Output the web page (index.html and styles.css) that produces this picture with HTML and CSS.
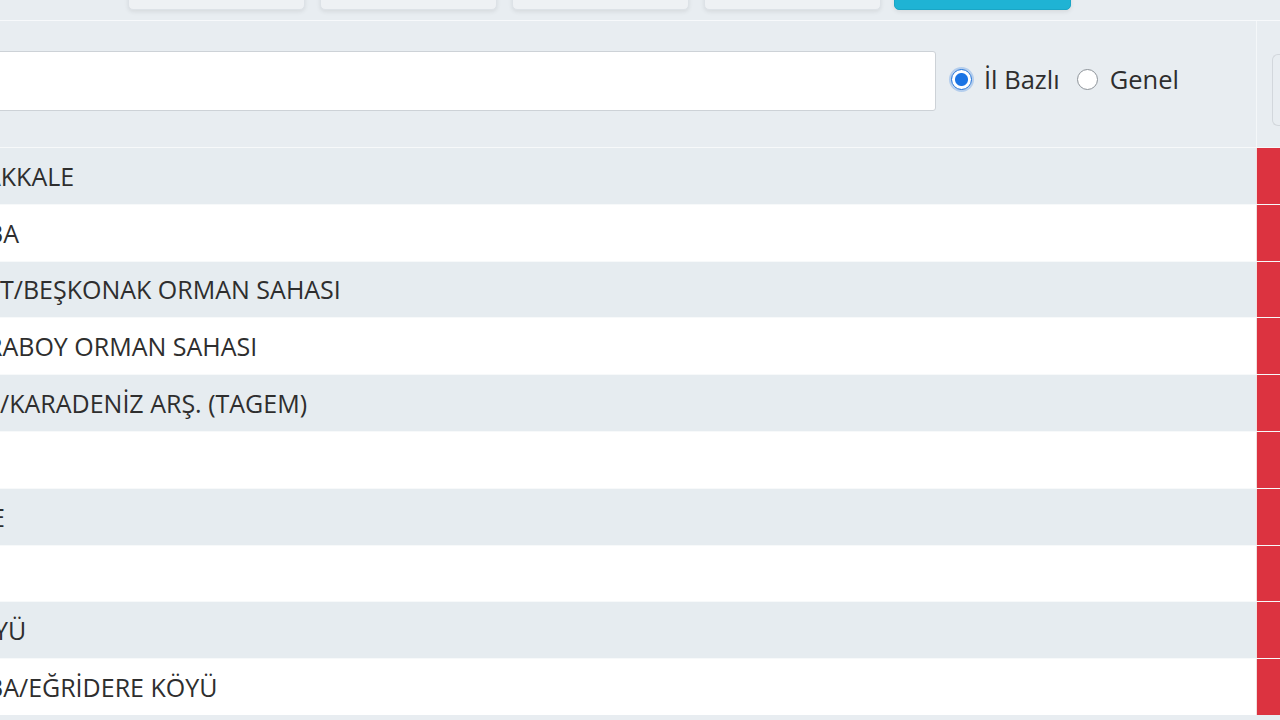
FILE: index.html
```html
<!DOCTYPE html>
<html lang="tr">
<head>
  <meta charset="UTF-8">
  <title>Liste</title>
  <link rel="stylesheet" href="styles.css">
</head>
<body>
  <div class="page">
    <div class="toolbar">
      <button class="tool-btn"></button>
      <button class="tool-btn"></button>
      <button class="tool-btn"></button>
      <button class="tool-btn"></button>
      <button class="tool-btn primary"></button>
    </div>

    <div class="filter-row">
      <div class="filter-main">
        <input type="text" class="search-input">
        <div class="radio-group">
          <label class="radio-label"><input type="radio" name="scope" checked> İl Bazlı</label>
          <label class="radio-label"><input type="radio" name="scope"> Genel</label>
        </div>
      </div>
      <div class="filter-side">
        <div class="side-box"></div>
      </div>
    </div>

    <div class="table">
      <div class="row striped"><div class="cell name cut-a">AKKALE</div><div class="cell status"></div></div>
      <div class="row"><div class="cell name cut-b">BA</div><div class="cell status"></div></div>
      <div class="row striped"><div class="cell name">T/BEŞKONAK ORMAN SAHASI</div><div class="cell status"></div></div>
      <div class="row"><div class="cell name cut-b">RABOY ORMAN SAHASI</div><div class="cell status"></div></div>
      <div class="row striped"><div class="cell name">/KARADENİZ ARŞ. (TAGEM)</div><div class="cell status"></div></div>
      <div class="row"><div class="cell name"></div><div class="cell status"></div></div>
      <div class="row striped"><div class="cell name cut-e">E</div><div class="cell status"></div></div>
      <div class="row"><div class="cell name"></div><div class="cell status"></div></div>
      <div class="row striped"><div class="cell name cut-y">YÜ</div><div class="cell status"></div></div>
      <div class="row"><div class="cell name cut-b">BA/EĞRİDERE KÖYÜ</div><div class="cell status"></div></div>
    </div>
  </div>
</body>
</html>
```

FILE: styles.css
```css
body {
  margin: 0;
  background: #e8edf1;
  font-family: "Open Sans", "Liberation Sans", sans-serif;
  color: #2e2e2e;
  overflow: hidden;
}

.page {
  margin-left: -20px;
  width: 1300px;
}

/* top buttons, only their lower edge is visible */
.toolbar {
  height: 21px;
  display: flex;
  align-items: flex-end;
  gap: 15px;
  padding: 0 0 10px 148px;
  box-sizing: border-box;
  border-bottom: 1px solid #f7f9fb;
}

.tool-btn {
  flex: 0 0 177px;
  height: 40px;
  border: 1px solid #dde2e7;
  border-radius: 5px;
  background: #eef1f4;
  box-shadow: 0 2px 4px rgba(0,0,0,0.08);
}

.tool-btn.primary {
  margin-left: -2px;
  background: #1fb3d4;
  border-color: #1aa6c6;
}

.filter-row {
  display: grid;
  grid-template-columns: 1276px 1fr;
  height: 126px;
}

.filter-main {
  display: flex;
  align-items: flex-start;
  padding-top: 30px;
}

.search-input {
  width: 956px;
  height: 60px;
  box-sizing: border-box;
  border: 1px solid #cdd2d7;
  border-radius: 3px;
  background: #fff;
}

.radio-group {
  display: flex;
  align-items: center;
  height: 56px;
  gap: 17px;
  margin-left: 15px;
  font-size: 25.5px;
}

.radio-label {
  display: flex;
  align-items: center;
  gap: 12px;
}

.radio-label input {
  appearance: none;
  margin: 0;
  width: 21px;
  height: 21px;
  border: 1.5px solid #8d9399;
  border-radius: 50%;
  background: #fff;
}

.radio-label input:checked {
  border-color: #1b6fd8;
  background: radial-gradient(circle, #1b74e4 0 6px, #fff 7px);
  box-shadow: 0 0 0 2px rgba(27,116,228,0.25);
}

.filter-side {
  border-left: 1px solid #f4f7f9;
  padding: 33px 0 0 15px;
}

.side-box {
  height: 70px;
  border: 1px solid #d2d7dc;
  border-right: none;
  border-radius: 6px 0 0 6px;
}

.row {
  display: grid;
  grid-template-columns: 1276px 24px;
  height: 56.8px;
  box-sizing: border-box;
  border-top: 1px solid #f7f9fa;
  background: #fff;
}

.row.striped {
  background: #e6ecf0;
}

.cell.name {
  display: flex;
  align-items: center;
  padding-left: 20px;
  font-size: 25px;
  white-space: nowrap;
}

/* first letters fall outside the visible crop */
.cut-a { text-indent: -15px; }
.cut-b { text-indent: -13px; }
.cut-e { text-indent: -9px; }
.cut-y { text-indent: -6px; }

.cell.status {
  background: #dc3340;
  border-left: 1px solid #f1dede;
}
```
